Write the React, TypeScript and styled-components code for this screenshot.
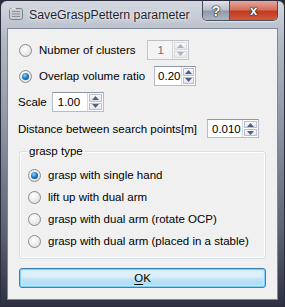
import styled, { createGlobalStyle } from 'styled-components';

const GlobalStyle = createGlobalStyle`
  html, body {
    margin: 0;
    padding: 0;
    background: #2a2c3c;
  }
  body {
    font-family: "Liberation Sans", Arial, sans-serif;
  }
`;

const Window = styled.div`
  width: 285px;
  height: 307px;
  box-sizing: border-box;
  display: flex;
  flex-direction: column;
  border: 1px solid #2b2d3e;
  border-radius: 7px 7px 0 0;
  background: linear-gradient(
    180deg,
    #d3d8e0 0%,
    #b4bbc6 12%,
    #8f96a4 40%,
    #5d6274 75%,
    #2e3044 100%
  );
  overflow: hidden;
`;

const TitleBar = styled.div`
  height: 27px;
  display: flex;
  align-items: flex-start;
  flex-shrink: 0;
`;

const AppIcon = styled.div`
  width: 16px;
  height: 16px;
  margin: 5px 0 0 7px;
`;

const Title = styled.div`
  margin: 7px 0 0 5px;
  font-size: 12.3px;
  color: #1b1e2a;
  text-shadow: 0 0 6px rgba(255, 255, 255, 0.9), 0 0 2px rgba(255, 255, 255, 0.9);
  white-space: nowrap;
`;

const Caption = styled.div`
  margin-left: auto;
  margin-right: 6px;
  display: flex;
  border: 1px solid #4a4f60;
  border-top: none;
  border-radius: 0 0 5px 5px;
  overflow: hidden;
  box-shadow: 0 1px 0 rgba(255, 255, 255, 0.5);
`;

const CapButton = styled.div<{ $close?: boolean }>`
  width: ${p => (p.$close ? 47 : 26)}px;
  height: 19px;
  display: flex;
  align-items: center;
  justify-content: center;
  font-weight: bold;
  font-size: ${p => (p.$close ? 13 : 14)}px;
  color: #fff;
  text-shadow: 0 0 1px #222, 0 0 2px #222, 0 0 1px #222;
  background: ${p =>
    p.$close
      ? 'linear-gradient(180deg, #e6a79c 0%, #d4715f 45%, #c23a1f 55%, #d25a3c 100%)'
      : 'linear-gradient(180deg, #dfe3ea 0%, #b9c0cb 45%, #9099a8 55%, #aeb6c3 100%)'};
  border-left: ${p => (p.$close ? '1px solid #5a4d55' : 'none')};
`;

const Client = styled.div`
  flex: 1;
  margin: 0 6px 8px 6px;
  border: 1px solid #7f8898;
  background: #f0f0f0;
  padding: 11px 11px 11px 11px;
  display: flex;
  flex-direction: column;
  font-size: 11.5px;
  color: #000;
`;

const Row = styled.div<{ $h: number; $mb: number }>`
  height: ${p => p.$h}px;
  margin-bottom: ${p => p.$mb}px;
  display: flex;
  align-items: center;
  white-space: nowrap;
`;

const RadioCircle = styled.span<{ $checked?: boolean }>`
  width: 11px;
  height: 11px;
  border-radius: 50%;
  border: 1px solid #8a8c8e;
  background: radial-gradient(circle at 40% 35%, #ffffff 0%, #e8e8e8 60%, #cfd0d2 100%);
  display: inline-flex;
  align-items: center;
  justify-content: center;
  flex-shrink: 0;
  margin-right: 7px;

  &::after {
    content: '';
    display: ${p => (p.$checked ? 'block' : 'none')};
    width: 7px;
    height: 7px;
    border-radius: 50%;
    background: radial-gradient(circle at 40% 35%, #8fd3ff 0%, #1e7fc8 45%, #0d3e70 100%);
  }
`;

const Label = styled.span<{ $ml?: number }>`
  margin-left: ${p => p.$ml ?? 0}px;
`;

const Spin = styled.div<{ $w: number; $h: number; $ml: number; $disabled?: boolean }>`
  width: ${p => p.$w}px;
  height: ${p => p.$h}px;
  margin-left: ${p => p.$ml}px;
  box-sizing: border-box;
  display: flex;
  background: ${p => (p.$disabled ? '#f4f4f4' : '#fff')};
  border: 1px solid ${p => (p.$disabled ? '#c2c5c9' : '#b5bcc7')};
  border-top-color: ${p => (p.$disabled ? '#bcbfc3' : '#8e96a3')};
  color: ${p => (p.$disabled ? '#6d6d6d' : '#000')};
`;

const SpinText = styled.div<{ $pl: number }>`
  flex: 1;
  display: flex;
  align-items: center;
  padding-left: ${p => p.$pl}px;
`;

const SpinButtons = styled.div`
  width: 15px;
  display: flex;
  flex-direction: column;
  border-left: 1px solid #d3d7dd;
`;

const SpinArrow = styled.div<{ $disabled?: boolean }>`
  flex: 1;
  display: flex;
  align-items: center;
  justify-content: center;
  background: linear-gradient(180deg, #f7f8fa 0%, #e3e7ee 100%);
  border: 1px solid ${p => (p.$disabled ? '#d9dadc' : '#b7c0cc')};
  margin: 1px;
  color: ${p => (p.$disabled ? '#b0b4b8' : '#4d6185')};
  &:first-child {
    margin-bottom: 0;
  }
`;

const Group = styled.fieldset`
  margin: 7px 0 0 0;
  padding: 7px 8px 6px 8px;
  border: 1px solid #d5dfe5;
  border-radius: 3px;
  box-shadow: inset 0 0 0 1px #fff;
  display: flex;
  flex-direction: column;
`;

const Legend = styled.legend`
  padding: 0 2px;
  margin-left: -1px;
  font-size: 11.5px;
`;

const OkButton = styled.div`
  margin-top: 9px;
  height: 20px;
  box-sizing: border-box;
  border: 1px solid #3c7fb1;
  border-radius: 3px;
  background: linear-gradient(180deg, #e5f4fc 0%, #d9eef9 45%, #bee4f8 55%, #a9d9f2 100%);
  box-shadow: inset 0 0 0 1px #7fd0f5, inset 0 0 2px 2px #c7ebfb;
  display: flex;
  align-items: center;
  justify-content: center;
  font-size: 11.5px;

  u {
    text-decoration: underline;
    text-underline-offset: 2px;
  }
`;

function Arrow({ up }: { up?: boolean }) {
  return (
    <svg width="7" height="4" viewBox="0 0 7 4">
      <path d={up ? 'M0 4 L3.5 0 L7 4 Z' : 'M0 0 L3.5 4 L7 0 Z'} fill="currentColor" />
    </svg>
  );
}

function SpinBox({
  value,
  w,
  h,
  ml,
  pl,
  disabled,
}: {
  value: string;
  w: number;
  h: number;
  ml: number;
  pl: number;
  disabled?: boolean;
}) {
  return (
    <Spin $w={w} $h={h} $ml={ml} $disabled={disabled}>
      <SpinText $pl={pl}>{value}</SpinText>
      <SpinButtons>
        <SpinArrow $disabled={disabled}>
          <Arrow up />
        </SpinArrow>
        <SpinArrow $disabled={disabled}>
          <Arrow />
        </SpinArrow>
      </SpinButtons>
    </Spin>
  );
}

function WindowIcon() {
  return (
    <svg width="16" height="16" viewBox="0 0 16 16">
      <rect x="1.5" y="2.5" width="13" height="11" rx="2" fill="#c9ccd2" stroke="#7d8087" />
      <path d="M4 5.5 H12 M4 8 H12 M4 10.5 H12" stroke="#8e9198" strokeWidth="1" />
      <path d="M2 4 Q5 1 8 3" stroke="#eef0f3" strokeWidth="1" fill="none" />
    </svg>
  );
}

export default function App() {
  const graspTypes = [
    'grasp with single hand',
    'lift up with dual arm',
    'grasp with dual arm (rotate OCP)',
    'grasp with dual arm (placed in a stable)',
  ];

  return (
    <>
      <GlobalStyle />
      <Window>
        <TitleBar>
          <AppIcon>
            <WindowIcon />
          </AppIcon>
          <Title>SaveGraspPettern parameter</Title>
          <Caption>
            <CapButton>?</CapButton>
            <CapButton $close>x</CapButton>
          </Caption>
        </TitleBar>

        <Client>
          <Row $h={20} $mb={6}>
            <RadioCircle />
            <Label>Nubmer of clusters</Label>
            <SpinBox value="1" w={42} h={20} ml={11} pl={10} disabled />
          </Row>
          <Row $h={20} $mb={6}>
            <RadioCircle $checked />
            <Label>Overlap volume ratio</Label>
            <SpinBox value="0.20" w={42} h={20} ml={9} pl={3} />
          </Row>
          <Row $h={20} $mb={7}>
            <Label $ml={-1}>Scale</Label>
            <SpinBox value="1.00" w={52} h={20} ml={5} pl={5} />
          </Row>
          <Row $h={19} $mb={0}>
            <Label $ml={-1}>Distance between search points[m]</Label>
            <SpinBox value="0.010" w={52} h={19} ml={10} pl={4} />
          </Row>

          <Group>
            <Legend>grasp type</Legend>
            {graspTypes.map((t, i) => (
              <Row key={t} $h={22} $mb={0}>
                <RadioCircle $checked={i === 0} />
                <Label>{t}</Label>
              </Row>
            ))}
          </Group>

          <OkButton>
            <span>
              <u>O</u>K
            </span>
          </OkButton>
        </Client>
      </Window>
    </>
  );
}
